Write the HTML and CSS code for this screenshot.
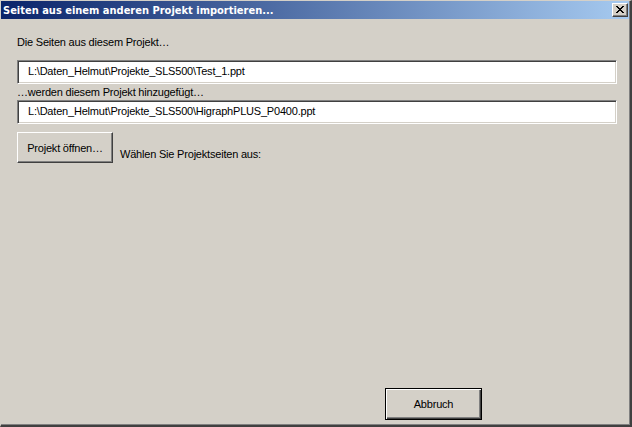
FILE: index.html
```html
<!DOCTYPE html>
<html>
<head>
<meta charset="utf-8">
<link rel="stylesheet" href="styles.css">
</head>
<body>
<div class="window">
  <div class="titlebar">
    <span class="title">Seiten aus einem anderen Projekt importieren...</span>
    <button class="close" aria-label="Schließen">
      <svg width="8" height="7" viewBox="0 0 8 7"><path d="M0 0h2v1h1v1h2V1h1V0h2v1H7v1H6v1H5v1h1v1h1v1h1v1H6V6H5V5H3v1H2v1H0V6h1V5h1V4h1V3H2V2H1V1H0z" fill="#000"/></svg>
    </button>
  </div>
  <div class="body">
    <div class="label first">Die Seiten aus diesem Projekt…</div>
    <div class="field">L:\Daten_Helmut\Projekte_SLS500\Test_1.ppt</div>
    <div class="label mid">…werden diesem Projekt hinzugefügt…</div>
    <div class="field">L:\Daten_Helmut\Projekte_SLS500\HigraphPLUS_P0400.ppt</div>
    <div class="row">
      <button class="btn open">Projekt öffnen…</button>
      <span class="hint">Wählen Sie Projektseiten aus:</span>
    </div>
    <div class="spacer"></div>
    <div class="footer">
      <button class="btn default">Abbruch</button>
    </div>
  </div>
</div>
</body>
</html>
```
FILE: styles.css
```css
html, body {
  margin: 0;
  padding: 0;
  background: #d4d0c8;
}
.window {
  width: 632px;
  height: 427px;
  box-sizing: border-box;
  background: #d4d0c8;
  border-top: 1px solid #d4d0c8;
  border-left: 1px solid #d4d0c8;
  border-right: 2px solid #404040;
  border-bottom: 2px solid #404040;
  box-shadow: inset -1px -1px 0 #808080;
  display: flex;
  flex-direction: column;
  font-family: "Liberation Sans", Arial, sans-serif;
  font-size: 11px;
  letter-spacing: -0.2px;
  color: #000;
}
.titlebar {
  height: 18px;
  flex: none;
  margin-right: 1px;
  background: linear-gradient(to right, #0a246a, #a6caf0);
  display: flex;
  align-items: center;
  justify-content: space-between;
  padding: 0 1px 0 2px;
}
.title {
  color: #fff;
  font-weight: bold;
  font-size: 11px;
  letter-spacing: 0;
  font-family: "DejaVu Sans Condensed", "DejaVu Sans", sans-serif;
  font-stretch: condensed;
  white-space: nowrap;
}
.close {
  width: 16px;
  height: 14px;
  padding: 0;
  margin: 0;
  background: #d4d0c8;
  border: 1px solid;
  border-color: #fff #404040 #404040 #fff;
  box-shadow: inset -1px -1px 0 #808080;
  display: flex;
  align-items: center;
  justify-content: center;
}
.close svg { display: block; margin-top: -1px; }
.body {
  flex: 1;
  display: flex;
  flex-direction: column;
  padding: 0 13px 5px 16px;
}
.label {
  white-space: nowrap;
}
.label.first {
  height: 13px;
  line-height: 13px;
  margin-top: 17px;
  margin-bottom: 11px;
}
.label.mid {
  height: 16px;
  line-height: 16px;
}
.field {
  height: 24px;
  flex: none;
  box-sizing: border-box;
  background: #fff;
  border: 1px solid;
  border-color: #808080 #fff #fff #808080;
  box-shadow: inset 1px 1px 0 #404040, inset -1px -1px 0 #d4d0c8;
  padding-left: 10px;
  line-height: 21px;
  white-space: nowrap;
}
.row {
  margin-top: 8px;
  display: flex;
  align-items: flex-end;
}
.btn {
  font-family: "Liberation Sans", Arial, sans-serif;
  font-size: 11px;
  letter-spacing: -0.2px;
  color: #000;
  background: #d4d0c8;
  padding: 0;
  margin: 0;
  border: 1px solid;
  border-color: #fff #404040 #404040 #fff;
  box-shadow: inset -1px -1px 0 #808080;
}
.btn.open {
  width: 96px;
  height: 31px;
}
.hint {
  margin-left: 7px;
  line-height: 13px;
  margin-bottom: 2px;
}
.spacer { flex: 1; }
.footer {
  display: flex;
  justify-content: flex-end;
  padding-right: 135px;
}
.btn.default {
  width: 97px;
  height: 32px;
  border: 1px solid #000;
  box-shadow: inset 1px 1px 0 #fff, inset -1px -1px 0 #404040, inset -2px -2px 0 #808080;
}
```
